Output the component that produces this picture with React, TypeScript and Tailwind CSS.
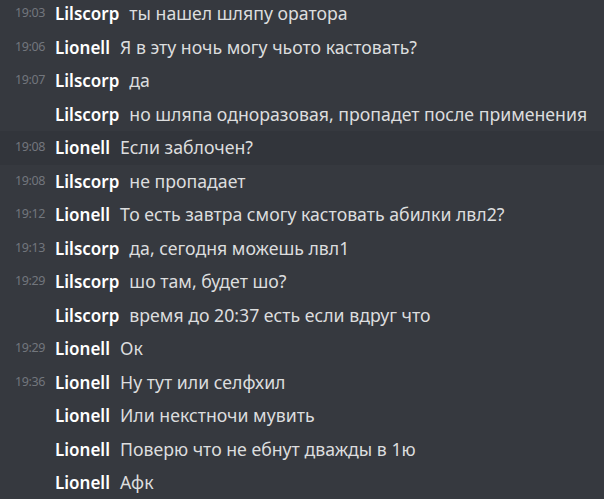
const messages: { time?: string; author: string; text: string; hover?: boolean }[] = [
  { time: '19:03', author: 'Lilscorp', text: 'ты нашел шляпу оратора' },
  { time: '19:06', author: 'Lionell', text: 'Я в эту ночь могу чьото кастовать?' },
  { time: '19:07', author: 'Lilscorp', text: 'да' },
  { author: 'Lilscorp', text: 'но шляпа одноразовая, пропадет после применения' },
  { time: '19:08', author: 'Lionell', text: 'Если заблочен?', hover: true },
  { time: '19:08', author: 'Lilscorp', text: 'не пропадает' },
  { time: '19:12', author: 'Lionell', text: 'То есть завтра смогу кастовать абилки лвл2?' },
  { time: '19:13', author: 'Lilscorp', text: 'да, сегодня можешь лвл1' },
  { time: '19:29', author: 'Lilscorp', text: 'шо там, будет шо?' },
  { author: 'Lilscorp', text: 'время до 20:37 есть если вдруг что' },
  { time: '19:29', author: 'Lionell', text: 'Ок' },
  { time: '19:36', author: 'Lionell', text: 'Ну тут или селфхил' },
  { author: 'Lionell', text: 'Или некстночи мувить' },
  { author: 'Lionell', text: 'Поверю что не ебнут дважды в 1ю' },
  { author: 'Lionell', text: 'Афк' },
];

export default function App() {
  return (
    <div className="w-[604px] h-[499px] overflow-hidden bg-[#36393f] font-['Noto_Sans','Open_Sans',sans-serif]">
      <div className="-mt-[3px]">
        {messages.map((m, i) => (
          <div
            key={i}
            className={`flex items-center h-[33.5px] whitespace-nowrap ${m.hover ? 'bg-[#32353b]' : ''}`}
          >
            <span className="w-[45px] shrink-0 text-right text-[12.5px] tracking-[-0.4px] text-[#72767d]">{m.time}</span>
            <span className="ml-[10px] text-[17px] font-semibold text-white">{m.author}</span>
            <span className="ml-[10px] text-[17.7px] text-[#dcddde]">{m.text}</span>
          </div>
        ))}
      </div>
    </div>
  );
}
